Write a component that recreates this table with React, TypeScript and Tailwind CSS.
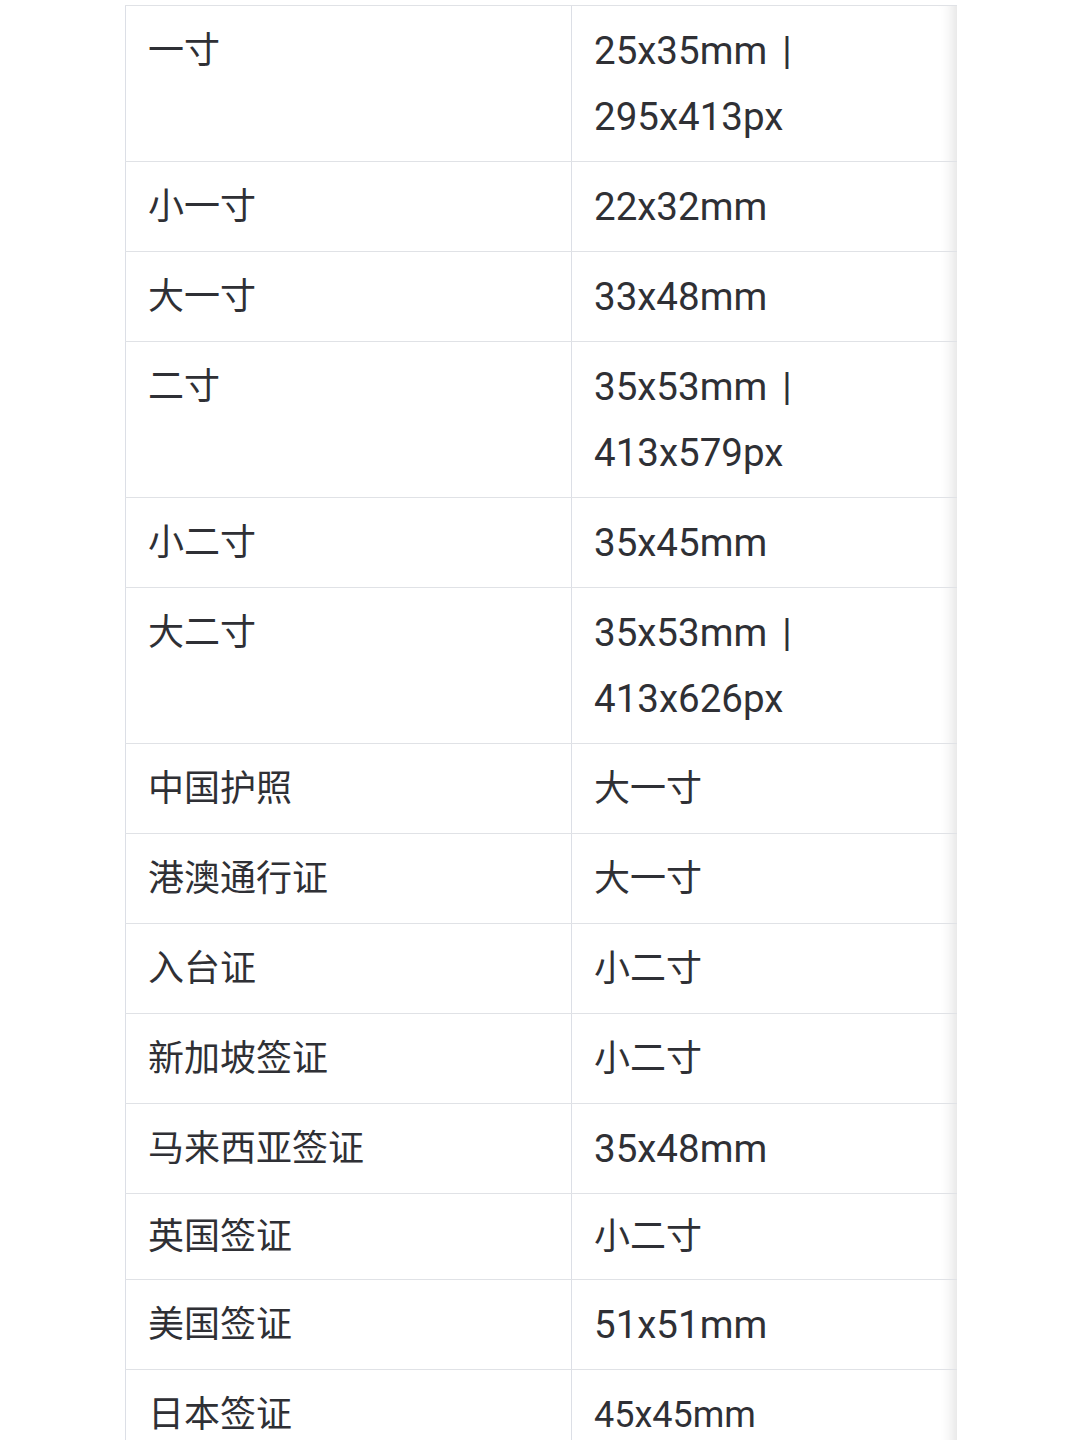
import React from "react";

type Row = { name: string; value: string[]; pad?: string; small?: boolean };

const rows: Row[] = [
  { name: "一寸", value: ["25x35mm |", "295x413px"] },
  { name: "小一寸", value: ["22x32mm"] },
  { name: "大一寸", value: ["33x48mm"] },
  { name: "二寸", value: ["35x53mm |", "413x579px"] },
  { name: "小二寸", value: ["35x45mm"] },
  { name: "大二寸", value: ["35x53mm |", "413x626px"] },
  { name: "中国护照", value: ["大一寸"] },
  { name: "港澳通行证", value: ["大一寸"] },
  { name: "入台证", value: ["小二寸"] },
  { name: "新加坡签证", value: ["小二寸"] },
  { name: "马来西亚签证", value: ["35x48mm"] },
  { name: "英国签证", value: ["小二寸"], pad: "short" },
  { name: "美国签证", value: ["51x51mm"] },
  { name: "日本签证", value: ["45x45mm"], small: true },
];

function Value({ v, small }: { v: string; small?: boolean }) {
  const numeric = /[0-9]/.test(v);
  const cls = numeric ? (small ? "text-[36px]" : "text-[38.5px]") : "text-[36px]";
  if (v.endsWith(" |")) {
    return (
      <div className={cls}>
        {v.slice(0, -2)}
        <span className="ml-[15px]">|</span>
      </div>
    );
  }
  return <div className={cls}>{v}</div>;
}

export default function App() {
  return (
    <div
      className="min-h-screen bg-white pl-[125px] pt-[5px] text-[#2f3035]"
      style={{ fontFamily: 'Roboto, "Noto Sans CJK SC", sans-serif' }}
    >
      <div className="w-[832px] border-t border-[#e0e2e6] shadow-[inset_-16px_0_14px_-12px_rgba(0,0,0,0.12)]">
        {rows.map((r, i) => {
          const padCls =
            r.pad === "short" ? "pt-[10px] pb-[9px]" : "pt-[12px] pb-[11px]";
          return (
            <div
              key={i}
              className="grid grid-cols-[447px_385px] border-b border-[#e0e2e6] text-[36px] leading-[66px]"
            >
              <div
                className={`border-l border-r border-[#dcdfe6] pl-[22px] pr-[22px] ${padCls}`}
              >
                {r.name}
              </div>
              <div className={`pl-[22px] pr-[22px] ${padCls}`}>
                {r.value.map((v, j) => (
                  <Value key={j} v={v} small={r.small} />
                ))}
              </div>
            </div>
          );
        })}
      </div>
    </div>
  );
}
